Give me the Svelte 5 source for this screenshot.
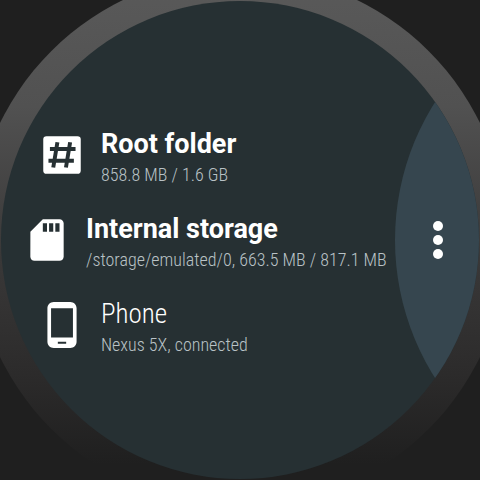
<script lang="ts">
	type Location = {
		id: string;
		title: string;
		detail: string;
		icon: 'root' | 'card' | 'phone';
		current?: boolean;
		light?: boolean;
	};

	const locations: Location[] = [
		{ id: 'root', title: 'Root folder', detail: '858.8 MB / 1.6 GB', icon: 'root' },
		{
			id: 'internal',
			title: 'Internal storage',
			detail: '/storage/emulated/0, 663.5 MB / 817.1 MB',
			icon: 'card',
			current: true
		},
		{ id: 'phone', title: 'Phone', detail: 'Nexus 5X, connected', icon: 'phone', light: true }
	];
</script>

<div class="watch">
	<div class="bezel">
		<main class="face">
			<ul class="locations">
				{#each locations as location (location.id)}
					<li>
						<button
							type="button"
							class={['location', { current: location.current, light: location.light }]}
						>
							<svg class="icon" viewBox="0 0 24 24" aria-hidden="true">
								{#if location.icon === 'root'}
									<rect x="3" y="3" width="18" height="18" rx="1.6" />
									<path
										class="cut"
										d="M9.800 5.900 7.800 18M15.900 5.900l-2 12.100M6.200 9.100h12.300M5.500 14.800h12.200"
									/>
								{:else if location.icon === 'card'}
									<path
										d="M18 2h-8L4.020 8 4 20c0 1.100.9 2 2 2h12c1.100 0 2-.9 2-2V4c0-1.100-.9-2-2-2zm-6 6h-2V4h2v4zm3 0h-2V4h2v4zm3 0h-2V4h2v4z"
									/>
								{:else}
									<path
										d="M16 1H8C6.340 1 5 2.340 5 4v16c0 1.660 1.340 3 3 3h8c1.660 0 3-1.340 3-3V4c0-1.660-1.340-3-3-3zm-2 20h-4v-1h4v1zm3.250-3H6.750V4h10.500v14z"
									/>
								{/if}
							</svg>
							<span class="text">
								<span class="title">{location.title}</span>
								<span class="detail">{location.detail}</span>
							</span>
						</button>
					</li>
				{/each}
			</ul>

			<!-- Action drawer peeking in from the right edge -->
			<button type="button" class="drawer" aria-label="More actions">
				<span class="dot"></span>
				<span class="dot"></span>
				<span class="dot"></span>
			</button>
		</main>
	</div>
</div>

<style>
	:global(body) {
		margin: 0;
		background: #1f1f1f;
	}

	.watch {
		display: flex;
		align-items: center;
		justify-content: center;
		height: 100vh;
		overflow: hidden;
		font-family: 'Roboto Condensed', Roboto, sans-serif;
	}

	.bezel {
		flex: none;
		display: flex;
		align-items: center;
		justify-content: center;
		width: calc(100vmin + 54px);
		aspect-ratio: 1;
		border-radius: 50%;
		background: linear-gradient(180deg, #5a5a5a 0%, #515151 25%, #3a3939 52%, #2c2b2b 75%, #1f1f1f 92%);
	}

	.face {
		position: relative;
		display: flex;
		align-items: center;
		width: calc(100vmin - 2px);
		aspect-ratio: 1;
		border-radius: 50%;
		overflow: hidden;
		background: #263033;
	}

	.locations {
		margin: 0;
		padding: 0 0 0 36px;
		list-style: none;
	}

	.location {
		display: flex;
		align-items: center;
		gap: 14px;
		height: 85px;
		padding: 0;
		border: 0;
		background: none;
		color: #fff;
		font: inherit;
		text-align: left;
		white-space: nowrap;
		cursor: pointer;
	}

	.location.current {
		margin-left: -15px;
	}

	.icon {
		flex: none;
		width: 50px;
		height: 50px;
		fill: #fff;
	}

	.cut {
		fill: none;
		stroke: #263033;
		stroke-width: 1.9;
	}

	.text {
		display: flex;
		flex-direction: column;
		padding-top: 6px;
	}

	.title {
		font-family: Roboto, sans-serif;
		font-size: 27px;
		line-height: 34px;
		font-weight: 700;
	}

	.light .title {
		font-family: 'Roboto Condensed', Roboto, sans-serif;
		font-weight: 300;
	}

	.detail {
		font-size: 18px;
		line-height: 28px;
		font-weight: 300;
		color: #b9c2c6;
	}

	.drawer {
		position: absolute;
		top: 50%;
		left: calc(100% - 84px);
		display: flex;
		flex-direction: column;
		justify-content: center;
		gap: 4px;
		width: calc(100vmin + 36px);
		aspect-ratio: 1;
		padding: 0 0 0 38px;
		border: 0;
		border-radius: 50%;
		background: #36464f;
		transform: translateY(-50%);
		cursor: pointer;
	}

	.dot {
		width: 10px;
		height: 10px;
		border-radius: 50%;
		background: #fff;
	}
</style>
